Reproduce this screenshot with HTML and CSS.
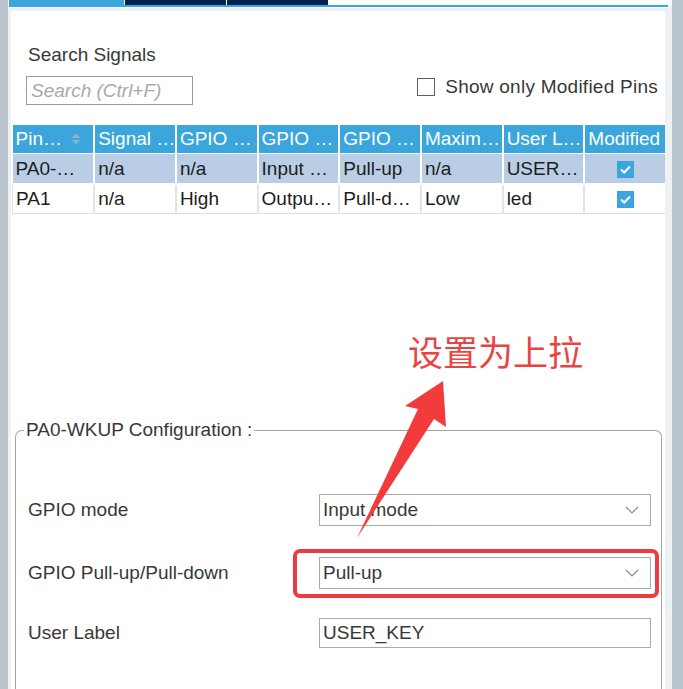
FILE: index.html
```html
<!DOCTYPE html>
<html lang="en">
<head>
    <meta charset="UTF-8">
    <title>Pinout Configuration</title>
    <link rel="stylesheet" href="styles.css">
</head>
<body>
    <div class="window">
        <div class="tabs">
            <div class="tab active"></div>
            <div class="tab"></div>
            <div class="tab"></div>
        </div>
        <div class="tabline"></div>
        <div class="panel">
            <div class="search-title">Search Signals</div>
            <div class="search-row">
                <input class="search-input" type="text" placeholder="Search (Ctrl+F)">
                <label class="modified-only">
                    <span class="box"></span>
                    Show only Modified Pins
                </label>
            </div>

            <table class="pins">
                <thead>
                    <tr>
                        <th>Pin…
                            <svg class="sort" width="10" height="14" viewBox="0 0 10 14">
                                <path d="M0.5 6 L5 1.5 L9.5 6 Z" fill="#9aaebf"/>
                                <path d="M0.5 8 L5 12.5 L9.5 8 Z" fill="#7ab4da"/>
                            </svg>
                        </th>
                        <th>Signal …</th>
                        <th>GPIO …</th>
                        <th>GPIO …</th>
                        <th>GPIO …</th>
                        <th>Maxim…</th>
                        <th>User L…</th>
                        <th>Modified</th>
                    </tr>
                </thead>
                <tbody>
                    <tr class="selected">
                        <td>PA0-…</td>
                        <td>n/a</td>
                        <td>n/a</td>
                        <td>Input …</td>
                        <td>Pull-up</td>
                        <td>n/a</td>
                        <td>USER…</td>
                        <td class="check-cell"><span class="tick"><svg width="17" height="17" viewBox="0 0 17 17"><path d="M4 8.5 L7.2 11.5 L13 5.5" fill="none" stroke="#fff" stroke-width="2"/></svg></span></td>
                    </tr>
                    <tr>
                        <td>PA1</td>
                        <td>n/a</td>
                        <td>High</td>
                        <td>Outpu…</td>
                        <td>Pull-d…</td>
                        <td>Low</td>
                        <td>led</td>
                        <td class="check-cell"><span class="tick"><svg width="17" height="17" viewBox="0 0 17 17"><path d="M4 8.5 L7.2 11.5 L13 5.5" fill="none" stroke="#fff" stroke-width="2"/></svg></span></td>
                    </tr>
                </tbody>
            </table>

            <fieldset class="config">
                <legend>PA0-WKUP Configuration :</legend>
                <div class="form-row first">
                    <div class="label">GPIO mode</div>
                    <div class="field">
                        <div class="select">Input mode
                            <svg class="chevron" width="14" height="8" viewBox="0 0 14 8"><path d="M1 1 L7 7 L13 1" fill="none" stroke="#8a8a8a" stroke-width="1.2"/></svg>
                        </div>
                    </div>
                </div>
                <div class="form-row">
                    <div class="label">GPIO Pull-up/Pull-down</div>
                    <div class="field">
                        <div class="select">Pull-up
                            <svg class="chevron" width="14" height="8" viewBox="0 0 14 8"><path d="M1 1 L7 7 L13 1" fill="none" stroke="#8a8a8a" stroke-width="1.2"/></svg>
                        </div>
                        <div class="highlight"></div>
                    </div>
                </div>
                <div class="form-row last">
                    <div class="label">User Label</div>
                    <div class="field">
                        <div class="text-field">USER_KEY</div>
                    </div>
                </div>
            </fieldset>
        </div>
    </div>

    <!-- annotation drawn over the screenshot -->
    <div class="note">设置为上拉</div>
    <svg class="arrow" width="683" height="689" viewBox="0 0 683 689">
        <polygon points="357,538 418,409 405,406 443,381 446,427 434,419" fill="#f23b3b"/>
    </svg>
</body>
</html>
```

FILE: styles.css
```css
body {
    margin: 0;
    height: 689px;
    overflow: hidden;
    position: relative;
    background: #b9c3cb;
    font-family: "Liberation Sans", Arial, sans-serif;
    font-size: 19px;
    color: #383838;
}
.window {
    margin-left: 8px;
    width: 664px;
    height: 100%;
    background: #eef1f3;
    display: flex;
    flex-direction: column;
}
.tabs {
    display: flex;
    flex-shrink: 0;
    height: 5px;
    padding-left: 1px;
    background: #fff;
}
.tab {
    width: 101px;
    background: #022352;
    margin-right: 1px;
}
.tab.active {
    width: 115px;
    background: #3aa6dc;
}
.tabline {
    flex-shrink: 0;
    height: 2px;
    margin: 0 4px 0 1px;
    background: #3aa6dc;
    border-bottom: 1px solid #fff;
}
.panel {
    flex: 1;
    min-height: 0;
    overflow: hidden;
    margin: 3px 7px 0 3px;
    background: #fff;
    display: flex;
    flex-direction: column;
}
.search-title {
    margin: 33px 0 0 17px;
    line-height: 22px;
}
.search-row {
    display: flex;
    justify-content: space-between;
    align-items: flex-start;
    margin-top: 10px;
    padding: 0 7px 0 15px;
}
.search-input {
    width: 167px;
    height: 29px;
    box-sizing: border-box;
    border: 1px solid #9a9a9a;
    padding: 0 4px;
    font-family: inherit;
    font-size: 19px;
    outline: none;
}
.search-input::placeholder {
    color: #a9a9a9;
    font-style: italic;
}
.modified-only {
    display: flex;
    align-items: center;
    gap: 10px;
    line-height: 22px;
    letter-spacing: 0.25px;
}
.modified-only .box {
    width: 16px;
    height: 16px;
    border: 1px solid #5e5e5e;
}
.pins {
    flex-shrink: 0;
    margin: 20px 0 0 1px;
    width: 654px;
    table-layout: fixed;
    border-collapse: collapse;
    color: #1d1d1d;
}
.pins th,
.pins td {
    height: 28px;
    padding: 0 3px;
    text-align: left;
    font-weight: normal;
    white-space: nowrap;
    overflow: hidden;
    border-right: 2px solid #fff;
}
.pins th {
    background: #3aa6dc;
    color: #fff;
    border-bottom: 1px solid #fff;
}
.pins th:last-child,
.pins td:last-child {
    border-right: none;
}
.pins .sort {
    vertical-align: -1px;
    margin-left: 4px;
}
.pins tr.selected td {
    background: #b9cee5;
    height: 29px;
    border-bottom: 2px solid #fff;
}
.pins tbody tr:last-child td {
    border-right-color: #e4e4e4;
    border-bottom: 1px solid #dedede;
}
.pins tbody tr:last-child td:first-child {
    border-left: 1px solid #e4e4e4;
}
.check-cell {
    text-align: center !important;
}
.tick {
    display: inline-block;
    width: 17px;
    height: 17px;
    background: #3aa6dc;
    vertical-align: middle;
}
.tick svg {
    display: block;
}
.config {
    flex-shrink: 0;
    margin: 205px 3px 0 4px;
    padding: 0;
    height: 320px;
    border: 1px solid #a3a3a3;
    border-bottom: none;
    border-radius: 7px 7px 0 0;
}
.config legend {
    margin-left: 8px;
    padding: 0 2px;
    line-height: 22px;
}
.form-row {
    display: flex;
    align-items: center;
    margin-top: 31px;
}
.form-row.first {
    margin-top: 53px;
}
.form-row.last {
    margin-top: 29px;
}
.label {
    width: 291px;
    padding-left: 12px;
}
.field {
    position: relative;
}
.select,
.text-field {
    width: 332px;
    height: 32px;
    box-sizing: border-box;
    border: 1px solid #a9a9a9;
    padding: 0 3px;
    display: flex;
    align-items: center;
    justify-content: space-between;
    background: #fff;
}
.text-field {
    height: 30px;
}
.chevron {
    margin-right: 8px;
}
.highlight {
    position: absolute;
    left: -26px;
    top: -8px;
    width: 366px;
    height: 49px;
    box-sizing: border-box;
    border: 4px solid #ef3b40;
    border-radius: 7px;
}
.note {
    position: absolute;
    left: 408px;
    top: 333px;
    font-family: "Noto Sans CJK SC", sans-serif;
    font-size: 35px;
    line-height: 35px;
    color: #e94444;
}
.arrow {
    position: absolute;
    left: 0;
    top: 0;
    pointer-events: none;
}
```
